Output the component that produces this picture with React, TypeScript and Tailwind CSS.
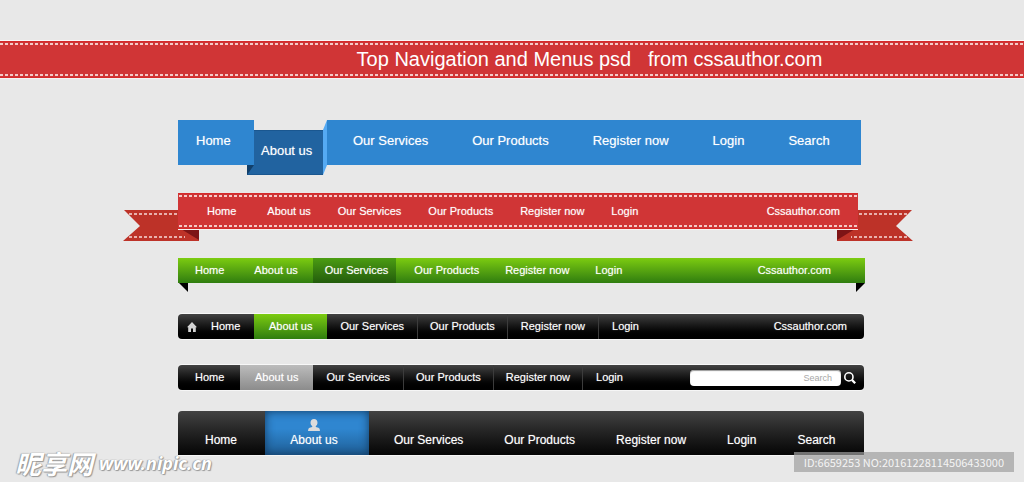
import type { ReactNode } from "react";

const cx = (...parts: (string | false | undefined)[]) => parts.filter(Boolean).join(" ");

function NavLink({ children, className }: { children: ReactNode; className?: string }) {
  return (
    <a href="#" className={cx("flex shrink-0 items-center whitespace-nowrap", className)}>
      {children}
    </a>
  );
}

function Stitch({ className }: { className?: string }) {
  return (
    <div
      className={cx(
        "h-[2px] bg-[repeating-linear-gradient(90deg,#fbe3e0_0_3px,transparent_3px_5px)] opacity-85",
        className,
      )}
    />
  );
}

function Banner() {
  return (
    <header className="flex h-[37px] flex-col justify-between border-y border-[#d62a2c] bg-[#d03536] py-px shadow-[0_-1px_0_#f8f8f8,0_1px_0_#f4f4f4]">
      <Stitch />
      <h1 className="whitespace-pre pb-[2px] pl-[155px] text-center text-[20px] leading-6 text-white">
        {"Top Navigation and Menus psd   from cssauthor.com"}
      </h1>
      <Stitch />
    </header>
  );
}

function BlueNav() {
  return (
    <nav aria-label="Blue menu" className="mr-[3px] mt-[42px] flex h-[55px] items-start text-[13px] [text-shadow:0_0_1px_#ffffff80]">
      <NavLink className="relative z-10 h-[45px] w-[76px] bg-[#2f86d0] pb-1 pl-[18px]">Home</NavLink>
      <NavLink className="relative -ml-[7px] mt-[10px] h-[45px] w-[76px] border-y border-[#1a5790] bg-[#2163a0] pb-1 pl-[14px]">
        About us
        <svg className="absolute -bottom-px left-0" width="7" height="10" aria-hidden="true">
          <path d="M0 0H7L0 10Z" fill="#123f69" />
        </svg>
      </NavLink>
      <svg className="shrink-0" width="4" height="55" aria-hidden="true">
        <path d="M4 0V45L0 55V10Z" fill="#55aaf3" />
      </svg>
      <div className="flex h-[45px] min-w-0 grow gap-[44px] bg-[#2f86d0] pb-1 pl-[26px]">
        <NavLink>Our Services</NavLink>
        <NavLink>Our Products</NavLink>
        <NavLink>Register now</NavLink>
        <NavLink>Login</NavLink>
        <NavLink>Search</NavLink>
      </div>
    </nav>
  );
}

function RibbonTail({ className }: { className?: string }) {
  return (
    <svg className={className} width="76" height="31" viewBox="0 0 76 31" aria-hidden="true">
      <path d="M1 0H76V31H0L17 16Z" fill="#bd3228" />
      <path d="M58 19H76V30Z" fill="#7d1416" />
      <path d="M6 4H56M6 27H62" stroke="#f6dcd8" strokeWidth="1.5" strokeDasharray="3 2" />
    </svg>
  );
}

function RibbonNav() {
  return (
    <div className="relative mr-[6px] mt-[18px]">
      <RibbonTail className="absolute -left-[55px] top-[17px]" />
      <RibbonTail className="absolute -right-[55px] top-[17px] -scale-x-100" />
      <nav
        aria-label="Red ribbon menu"
        className="relative flex h-[36px] flex-col justify-between border-y border-[#d62a2c] bg-[#d03536] py-px text-[11px] shadow-[0_1px_0_#f6f6f6] [text-shadow:0_0_1px_#ffffff80]"
      >
        <Stitch className="mx-px" />
        <div className="flex gap-[27px] pl-[29px] pr-[18px]">
          <NavLink className="pr-1">Home</NavLink>
          <NavLink>About us</NavLink>
          <NavLink>Our Services</NavLink>
          <NavLink>Our Products</NavLink>
          <NavLink>Register now</NavLink>
          <NavLink>Login</NavLink>
          <NavLink className="ml-auto">Cssauthor.com</NavLink>
        </div>
        <Stitch className="mx-px" />
      </nav>
    </div>
  );
}

function GreenNav() {
  return (
    <div className="-mr-px mt-[29px]">
      <nav
        aria-label="Green menu"
        className="flex h-[25px] bg-linear-to-b from-[#7ccc10] to-[#2f7d0f] pl-1 pr-[34px] text-[11px] [text-shadow:0_0_1px_#ffffff80]"
      >
        <NavLink className="px-[13px]">Home</NavLink>
        <NavLink className="pl-[17px] pr-[15px]">About us</NavLink>
        <NavLink className="bg-linear-to-b from-[#4b9d12] to-[#235c0c] pl-[12px] pr-[8px]">Our Services</NavLink>
        <NavLink className="pl-[18px] pr-[13px]">Our Products</NavLink>
        <NavLink className="px-[13px]">Register now</NavLink>
        <NavLink className="px-[13px]">Login</NavLink>
        <NavLink className="ml-auto">Cssauthor.com</NavLink>
      </nav>
      <div className="flex justify-between">
        <svg width="10" height="9" aria-hidden="true">
          <path d="M1 0H10V9Z" fill="#000" />
        </svg>
        <svg width="10" height="9" aria-hidden="true">
          <path d="M1 0H10L1 9Z" fill="#000" />
        </svg>
      </div>
    </div>
  );
}

const darkBar =
  "flex h-[25px] overflow-hidden rounded-[4px] bg-linear-to-b from-[#434343] to-black text-[11px] shadow-[0_-1px_0_#f8f8f8,0_1px_0_#f6f6f6] [text-shadow:0_0_1px_#ffffff80]";
const divider = "border-r border-[#3c3c3c]";

function HomeIconNav() {
  return (
    <nav aria-label="Dark menu with green highlight" className={cx(darkBar, "mt-[22px] pr-[17px]")}>
      <NavLink className="w-[76px] gap-[14px] pl-[9px]">
        <svg width="10" height="10" viewBox="0 0 10 10" aria-hidden="true">
          <path d="M5 0L10 5.2H8.8V10H6V6.5H4V10H1.2V5.2H0Z" fill="#d4d4d4" />
        </svg>
        Home
      </NavLink>
      <NavLink className="bg-linear-to-b from-[#7ccc10] to-[#2f7d0f] px-[15px]">About us</NavLink>
      <NavLink className={cx("px-[13px]", divider)}>Our Services</NavLink>
      <NavLink className={cx("px-[12px]", divider)}>Our Products</NavLink>
      <NavLink className={cx("px-[13px]", divider)}>Register now</NavLink>
      <NavLink className="px-[13px]">Login</NavLink>
      <NavLink className="ml-auto">Cssauthor.com</NavLink>
    </nav>
  );
}

function SearchNav() {
  return (
    <nav aria-label="Dark menu with search" className={cx(darkBar, "mt-[26px] pr-2")}>
      <NavLink className="w-[62px] pl-[17px]">Home</NavLink>
      <NavLink className="bg-linear-to-b from-[#bcbcbc] to-[#8c8c8c] px-[15px]">About us</NavLink>
      <NavLink className={cx("px-[13px]", divider)}>Our Services</NavLink>
      <NavLink className={cx("px-[12px]", divider)}>Our Products</NavLink>
      <NavLink className={cx("px-[12px]", divider)}>Register now</NavLink>
      <NavLink className="px-[13px]">Login</NavLink>
      <form className="ml-auto flex items-center gap-[3px]" onSubmit={(e) => e.preventDefault()}>
        <input
          type="text"
          aria-label="Search"
          placeholder="Search"
          className="h-[16px] w-[151px] rounded-[4px] bg-white px-[9px] text-right text-[9px] text-[#555] shadow-[inset_0_1px_1px_#999] placeholder:text-[#a8a8a8]"
        />
        <button type="submit" aria-label="Submit search">
          <svg width="12" height="12" viewBox="0 0 12 12" fill="none" stroke="#fff" aria-hidden="true">
            <circle cx="4.9" cy="4.9" r="4.1" strokeWidth="1.6" />
            <path d="M7.9 7.9L11.2 11.2" strokeWidth="2.2" />
          </svg>
        </button>
      </form>
    </nav>
  );
}

function TallNav() {
  return (
    <nav
      aria-label="Tall dark menu"
      className="mt-[21px] flex h-[44px] overflow-hidden rounded-t-[4px] bg-linear-to-b from-[#434343] to-[#060606] text-[12px] leading-[14px] shadow-[0_1px_0_#f6f6f6] [text-shadow:0_0_1px_#ffffff80]"
    >
      <NavLink className="w-[87px] pl-[27px] pt-[14px]">Home</NavLink>
      <NavLink className="w-[104px] flex-col gap-[2px] bg-[linear-gradient(#2f86d0_40%,#1f5f96)] pr-[6px] pt-2 shadow-[inset_0_0_10px_#123a60]">
        <svg width="12" height="12" viewBox="0 0 12 12" aria-hidden="true">
          <path
            d="M6 0C8.2 0 9.5 1.6 9.5 3.7C9.5 5.2 8.7 6.4 7.8 7V8L10.4 8.8Q12 9.4 12 12H0Q0 9.4 1.6 8.8L4.2 8V7C3.3 6.4 2.5 5.2 2.5 3.7C2.5 1.6 3.8 0 6 0Z"
            fill="#dcdcdc"
          />
        </svg>
        About us
      </NavLink>
      <div className="flex min-w-0 grow gap-[41px] pl-[25px] pt-[14px]">
        <NavLink>Our Services</NavLink>
        <NavLink>Our Products</NavLink>
        <NavLink>Register now</NavLink>
        <NavLink>Login</NavLink>
        <NavLink>Search</NavLink>
      </div>
    </nav>
  );
}

export default function App() {
  return (
    <div className="relative min-h-screen overflow-x-hidden bg-[#e8e8e8] pt-[41px] font-['Liberation_Sans',Arial,sans-serif] text-white">
      <Banner />
      <main className="pl-[18px]">
        <div className="mx-auto max-w-[686px]">
          <BlueNav />
          <RibbonNav />
          <GreenNav />
          <HomeIconNav />
          <SearchNav />
          <TallNav />
        </div>
      </main>
      <div className="absolute bottom-[7px] left-[15px] flex items-center gap-[6px] font-bold italic leading-6 text-white [text-shadow:0_0_1px_#888,1px_1px_1px_#999,-1px_0_1px_#aaa]">
        <span className="font-['Noto_Sans_CJK_SC',sans-serif] text-[26px]">昵享网</span>
        <span className="font-['Noto_Sans',sans-serif] text-[18px]">www.nipic.cn</span>
      </div>
      <div className="absolute bottom-[10px] right-[10px] flex h-[20px] items-center bg-[#a0a0a0]/70 px-[10px] font-['Noto_Sans_CJK_SC',sans-serif] text-[11px] text-[#f4f4f4]">
        ID:6659253 NO:20161228114506433000
      </div>
    </div>
  );
}
